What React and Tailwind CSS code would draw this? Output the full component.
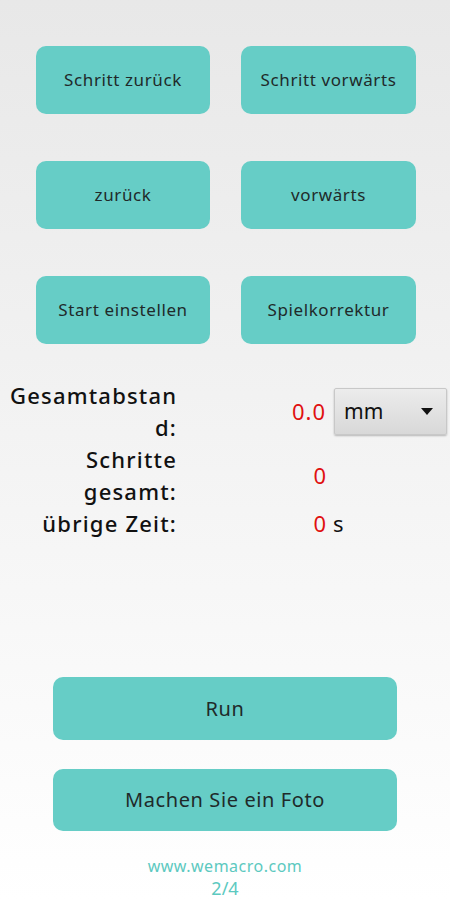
import React from 'react';

function TealButton({ children, className = '' }) {
    return (
        <button className={`bg-[#66cdc6] rounded-[10px] text-[#1f2a2a] flex items-center justify-center ${className}`}>
            {children}
        </button>
    );
}

export default function App() {
    const steps = [
        ['Schritt zurück', 'Schritt vorwärts'],
        ['zurück', 'vorwärts'],
        ['Start einstellen', 'Spielkorrektur'],
    ];

    return (
        <div className="w-[450px] h-[900px] bg-gradient-to-b from-[#e8e8e8] to-white flex flex-col font-['Noto_Sans',sans-serif]">
            <div className="pt-[46px] pl-[36px] grid grid-cols-[174px_175px] gap-x-[31px] gap-y-[47px]">
                {steps.flat().map((label) => (
                    <TealButton key={label} className="h-[68px] text-[17px] tracking-[0.6px]">{label}</TealButton>
                ))}
            </div>

            <div className="mt-[35px] grid grid-cols-[167px_149px_1fr] pl-[10px] leading-[32px] text-[22px]">
                <div className="text-right font-medium tracking-[1.2px] text-[#111]">Gesamtabstan<br />d:</div>
                <div className="flex items-center justify-end text-[#e01010] text-[22px] tracking-[1px]">0.0</div>
                <div className="flex items-center pl-[8px]">
                    <div className="w-[113px] h-[47px] bg-gradient-to-b from-[#ececec] to-[#d8d8d8] border border-[#c8c8c8] rounded-[2px] shadow-[0_1px_2px_rgba(0,0,0,0.25)] flex items-center justify-between pl-[9px] pr-[13px]">
                        <span className="text-[21px] text-[#111]">mm</span>
                        <svg width="12" height="7" viewBox="0 0 12 7"><path d="M0 0h12L6 7z" fill="#111" /></svg>
                    </div>
                </div>

                <div className="text-right font-medium tracking-[1.2px] text-[#111]">Schritte<br />gesamt:</div>
                <div className="flex items-center justify-end text-[#e01010] text-[22px]">0</div>
                <div />

                <div className="text-right font-medium tracking-[1.2px] text-[#111]">übrige Zeit:</div>
                <div className="flex items-center justify-end text-[#e01010] text-[22px]">0</div>
                <div className="pl-[7px] text-[22px] text-[#111]">s</div>
            </div>

            <div className="mt-[138px] pl-[53px] flex flex-col gap-[29px]">
                <TealButton className="w-[344px] h-[63px] text-[20px] tracking-[0.6px]">Run</TealButton>
                <TealButton className="w-[344px] h-[62px] text-[20px] tracking-[0.6px]">Machen Sie ein Foto</TealButton>
            </div>

            <div className="mt-[24px] flex flex-col items-center text-[#5cc9c0]">
                <span className="text-[16px] leading-[22px] tracking-[0.5px]">www.wemacro.com</span>
                <span className="text-[18px] leading-[22px]">2/4</span>
            </div>
        </div>
    );
}
